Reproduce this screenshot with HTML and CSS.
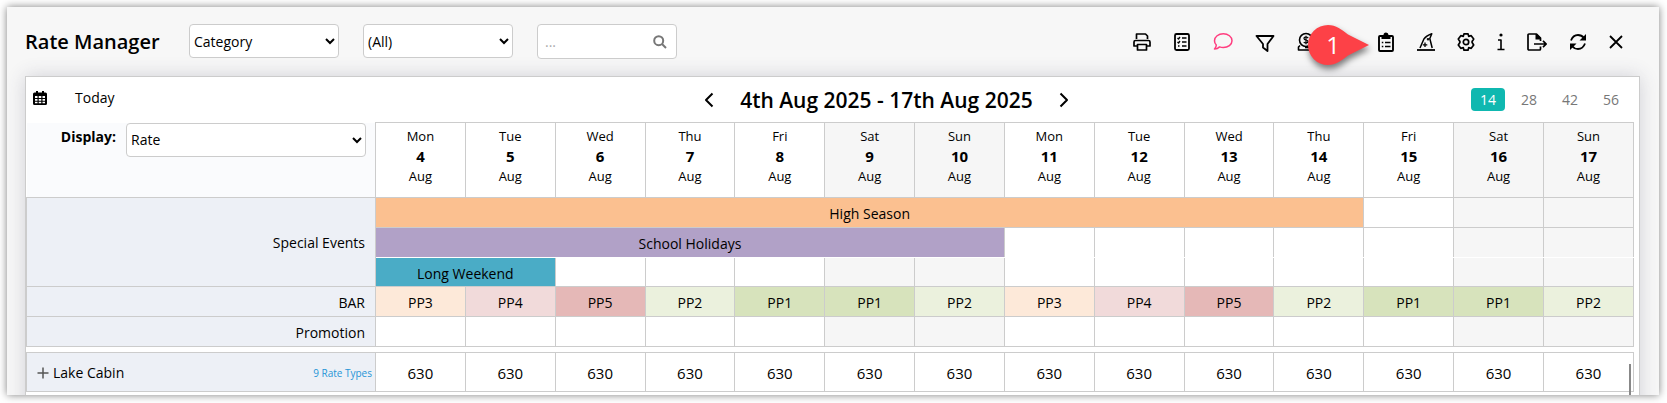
FILE: index.html
```html
<!DOCTYPE html>
<html lang="en">
<head>
    <meta charset="UTF-8">
    <meta name="viewport" content="width=device-width, initial-scale=1.0">
    <title>Rate Manager</title>
    <link rel="stylesheet" href="styles.css">
</head>
<body>
<div class="window">
    <header class="toolbar">
        <h1>Rate Manager</h1>
        <div class="filters">
            <select class="field" aria-label="Group by">
                <option>Category</option>
            </select>
            <select class="field" aria-label="Category">
                <option>(All)</option>
            </select>
            <div class="search">
                <input type="text" placeholder="..." aria-label="Search">
                <button type="button" aria-label="Search">
                    <svg width="14" height="14" viewBox="0 0 14 14"><circle cx="5.7" cy="5.7" r="4.5"/><path d="M9 9l4 4"/></svg>
                </button>
            </div>
        </div>
        <div class="actions">
            <button type="button" aria-label="Print">
                <svg width="18" height="20" viewBox="0 0 18 20"><path d="M3.500 7V2h9L14.500 4v3M4 14H1V10Q1 8.500 2.500 8.500h13Q17 8.500 17 10v4h-3M4.500 12.500h9V18h-9z" stroke-width="1.700"/></svg>
            </button>
            <button type="button" aria-label="Checklist">
                <svg width="18" height="20" viewBox="0 0 18 20"><rect x="2" y="2" width="14" height="16" rx="1.500" stroke-width="1.800"/><path d="M4.500 6l1 1 1.500-2M9 6h4.500M4.500 10l1 1 1.500-2M9 10h4.500M5 14h1.500M9 14h4.500" stroke-width="1.300"/></svg>
            </button>
            <button type="button" class="pink" aria-label="Comments">
                <svg width="20" height="20" viewBox="0 0 20 20"><path d="M1.500 17Q3.300 15.300 3.300 13Q1.500 11.300 1.500 8.700C1.500 4.700 5.500 1.800 10.300 1.800S19 4.700 19 8.700 15 15.500 10.300 15.500Q8.300 15.500 6.600 14.900Q4.500 17 1.500 17z" stroke-width="1.500"/></svg>
            </button>
            <button type="button" aria-label="Filter">
                <svg width="20" height="20" viewBox="0 0 20 20"><path d="M1.500 4h17L12.500 12v7L8 15.500V12z" stroke-width="1.800"/></svg>
            </button>
            <button type="button" aria-label="Payments">
                <svg width="18" height="20" viewBox="0 0 18 20"><circle cx="9" cy="8" r="6.500" stroke-width="1.600"/><path d="M11.200 6Q10.300 5 9 5 7 5 7 6.400 7 7.700 9 8T11 9.600Q11 11 9 11 7.500 11 6.700 10M9 3.800v8.400" stroke-width="1.200"/><path d="M3 13.500L1.500 15v3h15v-2.500H8" stroke-width="1.600"/></svg>
            </button>
            <div class="step">
                <svg width="72" height="54" viewBox="0 0 72 54"><path d="M23 5C31 5 37 10 43 14.500L64 25L43 35.500C37 40 31 45 23 45A20 20 0 0 1 23 5z"/></svg>
                <span>1</span>
            </div>
            <button type="button" aria-label="Tasks">
                <svg width="18" height="24" viewBox="0 0 18 24"><path d="M5 6H3Q2 6 2 7v13q0 1 1 1h12q1 0 1-1V7q0-1-1-1h-2" stroke-width="1.900"/><path class="solid" stroke="none" d="M4.500 5H6.500a2.500 2.500 0 0 1 5 0h2v4h-9z"/><path d="M4.800 12.500h1.500M8 12.500h5.500M4.800 16.500h1.500M8 16.500h5.500" stroke-width="1.500"/></svg>
            </button>
            <button type="button" aria-label="Wizard">
                <svg width="18" height="20" viewBox="0 0 18 20"><path d="M0 18h18" stroke-width="1.800"/><path d="M3 16L6.800 7.200Q9 4 14.800 1.800L12.800 6.500 15.200 16" stroke-width="1.500"/><path d="M8 10.500v4.500M5.800 12.800h4.500M11 6v2.500M9.800 7.200h2.500" stroke-width="1.300"/></svg>
            </button>
            <button type="button" aria-label="Settings">
                <svg width="18" height="20" viewBox="0 0 18 20"><path d="M7 1.800h4l.7 2.500 2.500-.6 2.500 3.300-1.600 2.500v1l1.600 2.500-2.500 3.300-2.500-.6-.7 2.500H7l-.7-2.500-2.500.6L1.300 13l1.600-2.500v-1L1.300 7l2.500-3.300 2.500.6z" stroke-width="1.700"/><circle cx="9" cy="10" r="2.700" stroke-width="1.700"/></svg>
            </button>
            <button type="button" aria-label="Information">
                <svg width="8" height="20" viewBox="0 0 8 20"><circle class="solid" cx="4" cy="3" r="1.600" stroke="none"/><path d="M1 8h3v9.500M.5 17.500h7" stroke-width="1.600"/></svg>
            </button>
            <button type="button" aria-label="Export">
                <svg width="20" height="20" viewBox="0 0 20 20"><path d="M13.500 14.500V17q0 1-1 1H2q-1 0-1-1V3q0-1 1-1h7.500l4 4V9M7 12h12M16 8.800l3.200 3.200L16 15.200" stroke-width="1.700"/><path class="solid" stroke="none" d="M8.500 2v5.500h5.500V6L10 2z"/></svg>
            </button>
            <button type="button" aria-label="Refresh">
                <svg width="18" height="20" viewBox="0 0 18 20"><path d="M2 8.500Q4 3 9 3q3.500 0 6 3M16 11.500Q14 17 9 17q-3.500 0-6-3" stroke-width="1.800"/><path class="solid" d="M17 2v6.500h-6.500zM1 18v-6.500h6.500z" stroke="none"/></svg>
            </button>
            <button type="button" aria-label="Close">
                <svg width="14" height="20" viewBox="0 0 14 20"><path d="M1 4l12 12M13 4L1 16" stroke-width="1.800"/></svg>
            </button>
        </div>
    </header>

    <main class="panel">
        <div class="period">
            <div class="period-left">
                <button type="button" aria-label="Pick a date">
                    <svg width="14" height="14" viewBox="0 0 14 14"><path class="solid" fill-rule="evenodd" stroke="none" d="M3 0h2v1.500h4V0h2v1.500h1.500Q14 1.500 14 3v9.500Q14 14 12.500 14h-11Q0 14 0 12.500V3Q0 1.500 1.500 1.500H3zM2 5v2h2.500V5zM5.700 5v2h2.600V5zM9.500 5v2H12V5zM2 8v1.700h2.500V8zM5.700 8v1.700h2.600V8zM9.500 8v1.700H12V8zM2 10.700v1.500h2.500v-1.500zM5.700 10.700v1.500h2.600v-1.500zM9.500 10.700v1.500H12v-1.500z"/></svg>
                </button>
                <button type="button">Today</button>
            </div>
            <div class="period-nav">
                <button type="button" aria-label="Previous">
                    <svg width="10" height="16" viewBox="0 0 10 16"><path d="M8.500 1.500L2 8l6.500 6.500"/></svg>
                </button>
                <h2>4th Aug 2025 - 17th Aug 2025</h2>
                <button type="button" aria-label="Next">
                    <svg width="10" height="16" viewBox="0 0 10 16"><path d="M1.500 1.500L8 8l-6.500 6.500"/></svg>
                </button>
            </div>
            <div class="period-days">
                <button type="button" class="active">14</button>
                <button type="button">28</button>
                <button type="button">42</button>
                <button type="button">56</button>
            </div>
        </div>

        <div class="grid">
            <table class="calendar">
                <colgroup><col class="label-col"><col span="14"></colgroup>
                <thead>
                    <tr>
                        <td class="display-cell">
                            <div class="display">
                                <label for="display">Display:</label>
                                <select class="field" id="display">
                                    <option>Rate</option>
                                </select>
                            </div>
                        </td>
                        <th>Mon<b>4</b>Aug</th>
                        <th>Tue<b>5</b>Aug</th>
                        <th>Wed<b>6</b>Aug</th>
                        <th>Thu<b>7</b>Aug</th>
                        <th>Fri<b>8</b>Aug</th>
                        <th class="weekend">Sat<b>9</b>Aug</th>
                        <th class="weekend">Sun<b>10</b>Aug</th>
                        <th>Mon<b>11</b>Aug</th>
                        <th>Tue<b>12</b>Aug</th>
                        <th>Wed<b>13</b>Aug</th>
                        <th>Thu<b>14</b>Aug</th>
                        <th>Fri<b>15</b>Aug</th>
                        <th class="weekend">Sat<b>16</b>Aug</th>
                        <th class="weekend">Sun<b>17</b>Aug</th>
                    </tr>
                </thead>
                <tbody>
                    <tr>
                        <th class="row-label" rowspan="3">Special Events</th>
                        <td class="high-season" colspan="11">High Season</td>
                        <td></td>
                        <td class="weekend"></td>
                        <td class="weekend"></td>
                    </tr>
                    <tr class="soft-line">
                        <td class="holidays" colspan="7">School Holidays</td>
                        <td></td><td></td><td></td><td></td><td></td>
                        <td class="weekend"></td>
                        <td class="weekend"></td>
                    </tr>
                    <tr class="last-event">
                        <td class="long-weekend" colspan="2">Long Weekend</td>
                        <td></td><td></td><td></td>
                        <td class="weekend"></td>
                        <td class="weekend"></td>
                        <td></td><td></td><td></td><td></td><td></td>
                        <td class="weekend"></td>
                        <td class="weekend"></td>
                    </tr>
                    <tr>
                        <th class="row-label">BAR</th>
                        <td class="pp3">PP3</td>
                        <td class="pp4">PP4</td>
                        <td class="pp5">PP5</td>
                        <td class="pp2">PP2</td>
                        <td class="pp1">PP1</td>
                        <td class="pp1">PP1</td>
                        <td class="pp2">PP2</td>
                        <td class="pp3">PP3</td>
                        <td class="pp4">PP4</td>
                        <td class="pp5">PP5</td>
                        <td class="pp2">PP2</td>
                        <td class="pp1">PP1</td>
                        <td class="pp1">PP1</td>
                        <td class="pp2">PP2</td>
                    </tr>
                    <tr>
                        <th class="row-label">Promotion</th>
                        <td></td><td></td><td></td><td></td><td></td>
                        <td class="weekend"></td>
                        <td class="weekend"></td>
                        <td></td><td></td><td></td><td></td><td></td>
                        <td class="weekend"></td>
                        <td class="weekend"></td>
                    </tr>
                </tbody>
            </table>

            <table class="calendar rates">
                <colgroup><col class="label-col"><col span="14"></colgroup>
                <tbody>
                    <tr>
                        <th class="room">
                            <div class="room-name">
                                <button type="button" aria-label="Expand">
                                    <svg width="12" height="12" viewBox="0 0 12 12"><path d="M6 .5v11M.5 6h11" stroke-width="1.500"/></svg>
                                </button>
                                <span>Lake Cabin</span>
                                <a href="#">9 Rate Types</a>
                            </div>
                        </th>
                        <td>630</td><td>630</td><td>630</td><td>630</td><td>630</td><td>630</td><td>630</td>
                        <td>630</td><td>630</td><td>630</td><td>630</td><td>630</td><td>630</td><td>630</td>
                    </tr>
                </tbody>
            </table>
            <div class="scroll-thumb"></div>
        </div>
    </main>
</div>
</body>
</html>
```
FILE: styles.css
```css
* {
    box-sizing: border-box;
    margin: 0;
    padding: 0;
}

body {
    font-family: 'Open Sans', sans-serif;
    font-size: 14px;
    line-height: 20px;
    color: #000;
    background-color: #fff;
}

button {
    border: none;
    background: none;
    font: inherit;
    color: inherit;
    cursor: pointer;
}

svg {
    display: block;
    fill: none;
    stroke: currentColor;
    stroke-width: 2;
    stroke-linejoin: round;
}

svg .solid {
    fill: currentColor;
}

.window {
    margin: 7px 8px 8px 7px;
    padding: 0 19px 0 18px;
    background-color: #f7f7f7;
    box-shadow: 0 0 8px rgba(0, 0, 0, 0.5);
    overflow: hidden;
}

/* Toolbar */
.toolbar {
    display: flex;
    align-items: center;
    height: 69px;
    padding-right: 17px;
}

.toolbar h1 {
    width: 164px;
    font-size: 20px;
    font-weight: 600;
    line-height: 28px;
}

.filters {
    display: flex;
    gap: 24px;
}

.field {
    width: 150px;
    height: 34px;
    border: 1px solid #ccc;
    border-radius: 4px;
    background-color: #fff;
    font: inherit;
    color: #000;
}

.search {
    display: flex;
    align-items: center;
    width: 140px;
    height: 35px;
    padding: 0 9px 0 7px;
    border: 1px solid #ccc;
    border-radius: 4px;
    background-color: #fff;
    color: #777;
}

.search input {
    flex: 1;
    min-width: 0;
    border: none;
    outline: none;
    font: inherit;
}

.search input::placeholder {
    color: #aaa;
}

.actions {
    display: flex;
    align-items: center;
    gap: 22px;
    margin-left: auto;
}

.pink {
    color: #ff3d7f;
}

/* Numbered callout */
.step {
    position: relative;
    width: 18px;
    height: 20px;
}

.step svg {
    position: absolute;
    top: -12px;
    left: -32px;
    fill: #fd4147;
    stroke: none;
    filter: drop-shadow(1px 4px 3px rgba(0, 0, 0, 0.5));
}

.step span {
    position: absolute;
    top: -1px;
    left: -14px;
    width: 20px;
    font-size: 24px;
    line-height: 28px;
    text-align: center;
    color: #fff;
}

/* Panel */
.panel {
    margin-bottom: -22px;
    padding-bottom: 24px;
    border: 1px solid #ccc;
    background-color: #fff;
    box-shadow: 0 0 18px rgba(60, 60, 90, 0.2);
}

.period {
    display: grid;
    grid-template-columns: 6fr auto 5fr;
    align-items: center;
    height: 45px;
    padding: 0 11px 0 7px;
}

.period-left {
    display: flex;
    align-items: center;
    gap: 28px;
    padding-bottom: 4px;
}

.period-nav {
    display: flex;
    align-items: center;
    gap: 26px;
}

.period-nav h2 {
    font-size: 21px;
    font-weight: 600;
    line-height: 28px;
}

.period-days {
    display: flex;
    justify-content: flex-end;
    gap: 7px;
}

.period-days button {
    width: 34px;
    height: 23px;
    border-radius: 4px;
    color: #777;
}

.period-days .active {
    background-color: #0fb8b0;
    color: #fff;
}

/* Calendar */
.grid {
    position: relative;
    padding-right: 5px;
}

.calendar {
    width: 100%;
    table-layout: fixed;
    border-collapse: collapse;
}

.label-col {
    width: 349px;
}

.calendar th,
.calendar td {
    height: 30px;
    border: 1px solid #ccc;
    font-weight: 400;
    text-align: center;
}

.calendar tbody td,
.calendar .row-label {
    padding-top: 2px;
}

.calendar thead th {
    height: 75px;
    padding-bottom: 8px;
    font-size: 13px;
}

.calendar thead b {
    display: block;
    font-size: 15px;
    font-weight: 700;
}

.calendar .display-cell {
    border-top: none;
    border-left: none;
    background-color: #fafbfd;
    vertical-align: top;
}

.display {
    display: flex;
    justify-content: flex-end;
    gap: 10px;
    padding-right: 9px;
}

.display label {
    font-weight: 700;
    line-height: 28px;
}

.display .field {
    width: 240px;
}

.calendar .row-label {
    padding-right: 10px;
    background-color: #edf0f6;
    text-align: right;
}

.calendar .weekend {
    background-color: #f6f6f6;
}

.calendar .soft-line td {
    border-bottom-color: #fff;
}

.calendar .last-event td {
    height: 29px;
    padding-top: 4px;
    border-top-color: #fff;
}

.high-season {
    background-color: #fbc090;
}

.holidays {
    background-color: #b1a1c7;
}

.long-weekend {
    background-color: #4aacc6;
}

.pp1 {
    background-color: #d7e3bc;
}

.pp2 {
    background-color: #ebf1dd;
}

.pp3 {
    background-color: #fde9d9;
}

.pp4 {
    background-color: #f1dada;
}

.pp5 {
    background-color: #e5b8b7;
}

.rates {
    margin-top: 5px;
}

.rates th,
.rates td {
    height: 39px;
}

.rates td {
    font-size: 15px;
}

.rates .room {
    padding-top: 2px;
    background-color: #edf0f6;
}

.room-name {
    display: flex;
    align-items: center;
    gap: 4px;
    padding: 0 3px 0 10px;
}

.room-name button {
    color: #555;
}

.room-name a {
    margin-left: auto;
    font-size: 10px;
    color: #2795d6;
    text-decoration: none;
}

.scroll-thumb {
    position: absolute;
    right: 8px;
    bottom: -4px;
    width: 2px;
    height: 32px;
    background-color: #888;
}
```
